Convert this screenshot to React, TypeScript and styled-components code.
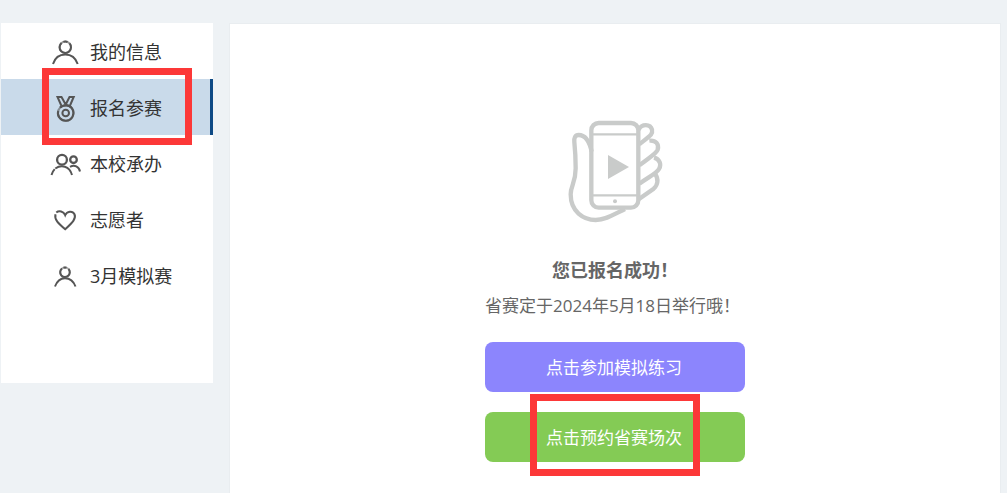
import React from "react";
import styled, { createGlobalStyle, css } from "styled-components";

const GlobalStyle = createGlobalStyle`
  *, *::before, *::after { box-sizing: border-box; }
  body {
    margin: 0;
    background: #eef2f5;
    color: #333;
    font-family: "Open Sans", "Noto Sans CJK SC", sans-serif;
  }
`;

const Page = styled.div`
  display: flex;
  align-items: flex-start;
  gap: 16px;
  min-height: 100vh;
  padding: 23px 6px 0 1px;
`;

const Sidebar = styled.nav`
  flex: 0 0 212px;
  min-height: 360px;
  background: #fff;
`;

const Menu = styled.ul`
  margin: 0;
  padding: 0;
  list-style: none;
`;

const MenuItem = styled.li`
  position: relative;
`;

const MenuLink = styled.a<{ $active?: boolean }>`
  display: flex;
  align-items: center;
  gap: 8px;
  height: 56px;
  padding: 2px 0 0 49px;
  color: #333;
  font-size: 18px;
  line-height: 24px;
  text-decoration: none;
  ${(p) =>
    p.$active &&
    css`
      background: #c9daea;
      border-right: 3px solid #0e4a85;
    `}
`;

const MenuIcon = styled.svg`
  width: 32px;
  height: 32px;
  fill: none;
  stroke: #555;
  stroke-width: 2;
`;

const Panel = styled.main`
  flex: 1;
  align-self: stretch;
  display: flex;
  flex-direction: column;
  align-items: center;
  padding: 96px 0 30px;
  background: #fff;
  border: 1px solid #e9edf0;
  border-bottom: 0;
`;

const Illustration = styled.svg`
  width: 95px;
  height: 103px;
  fill: none;
  stroke: #c9cbca;
  stroke-width: 13;
`;

const Result = styled.section`
  display: flex;
  flex-direction: column;
  width: 260px;
  margin-top: 34px;
  color: #666;
`;

const Title = styled.h1`
  margin: 0;
  font-size: 18px;
  line-height: 26px;
  text-align: center;
`;

const Notice = styled.p`
  margin: 10px 0 23px;
  font-size: 17px;
  line-height: 26px;
  white-space: nowrap;
`;

const Action = styled.div`
  position: relative;
  & + & { margin-top: 20px; }
`;

const ActionButton = styled.button<{ $color: string }>`
  display: block;
  width: 100%;
  height: 50px;
  padding: 2px 2px 0 0;
  border: 0;
  border-radius: 8px;
  background: ${(p) => p.$color};
  color: #fff;
  font-family: inherit;
  font-size: 17px;
  line-height: 24px;
  cursor: pointer;
`;

const Highlight = styled.span<{ $inset: string }>`
  position: absolute;
  inset: ${(p) => p.$inset};
  border: 7px solid #fc3838;
  pointer-events: none;
`;

const UserIcon = () => (
  <MenuIcon viewBox="0 0 32 32" aria-hidden="true">
    <circle cx="15.300" cy="11.300" r="5.700" strokeOpacity="0.6" />
    <path d="M11.500 7A5.700 5.700 0 1 0 19.500 7.400M13.400 5.900A5.700 5.700 0 0 1 17.500 6" />
    <path d="M3 28C5 21.500 9.500 18.500 15.300 18.500S25.500 21.500 27.700 28" />
  </MenuIcon>
);

const MedalIcon = () => (
  <MenuIcon viewBox="0 0 32 32" aria-hidden="true">
    <circle cx="15.700" cy="21" r="7.800" strokeOpacity="0.6" />
    <path d="M8.200 18.900A7.800 7.800 0 1 0 10.200 15.500" />
    <path d="M10.200 15.500A7.800 7.800 0 0 1 21.200 15.500" />
    <circle cx="15.700" cy="21" r="3.300" />
    <path d="M11.500 14L7.500 5H11.500L15.700 12.500L19.500 5H23.700L19.800 14" />
  </MenuIcon>
);

const TeamIcon = () => (
  <MenuIcon viewBox="0 0 32 32" aria-hidden="true">
    <circle cx="12" cy="11.700" r="4.900" strokeWidth="2.300" />
    <circle cx="23.500" cy="11.700" r="3.300" strokeWidth="2.300" />
    <path d="M1.500 27C2.200 24.500 3.300 22.500 4.700 21.100M5.300 20.500C11 16.500 19.500 17.500 22 27M20 18.900C24.500 16.500 29 18.500 30 23.500" />
  </MenuIcon>
);

const HeartIcon = () => (
  <MenuIcon viewBox="0 0 32 32" aria-hidden="true">
    <path d="M6.300 8.600C9 6.300 13.500 7.300 15.200 11.200C17 7.200 22.500 6.500 24.500 10.300C26.500 14.500 22.500 18.500 15.200 25.200C8.500 19.500 4 15.500 5.500 10.200" />
  </MenuIcon>
);

const GuestIcon = () => (
  <MenuIcon viewBox="0 0 32 32" aria-hidden="true">
    <circle cx="15" cy="12.300" r="4.800" strokeOpacity="0.5" />
    <path d="M12 8.500A4.800 4.800 0 1 0 18.500 9M13.500 7.700A4.800 4.800 0 0 1 16.500 7.700" />
    <path d="M5 26.500C7 21 10.500 18.200 15 18.200S23.500 21 25.500 26.500" />
  </MenuIcon>
);

const PhoneInHand = () => (
  <Illustration viewBox="54 45 285 309" role="img" aria-label="手机">
    <path d="M125 140C119 112 108 90 86 90C75 90 72 99 73 111C77 150 77 170 77 190C77 235 62 240 62 268C62 320 100 345 137 345C168 345 192 328 225 312" />
    <path d="M266 74C275 56 301 56 306 74C309 88 302 91 268 118" />
    <path d="M298 107C318 105 328 118 323 134C319 145 308 150 268 181" />
    <path d="M312 158C329 162 335 178 327 192C320 205 300 213 268 236" />
    <path d="M316 208C326 222 324 240 311 251L266 283" />
    <rect x="124" y="54" width="141" height="254" rx="22" />
    <path d="M124 88H265M124 271H265" strokeWidth="7" />
    <circle cx="195" cy="289" r="6" fill="#c9cbca" stroke="none" />
    <path d="M174 150L237 186L174 222Z" fill="#c9cbca" stroke="none" />
  </Illustration>
);

const menu = [
  { label: "我的信息", Icon: UserIcon },
  { label: "报名参赛", Icon: MedalIcon, active: true },
  { label: "本校承办", Icon: TeamIcon },
  { label: "志愿者", Icon: HeartIcon },
  { label: "3月模拟赛", Icon: GuestIcon },
];

export default function App() {
  return (
    <>
      <GlobalStyle />
      <Page>
        <Sidebar>
          <Menu>
            {menu.map(({ label, Icon, active }) => (
              <MenuItem key={label}>
                <MenuLink href="#" $active={active} aria-current={active ? "page" : undefined}>
                  <Icon />
                  {label}
                </MenuLink>
                {active && <Highlight $inset="-11px 21px -10px 41px" />}
              </MenuItem>
            ))}
          </Menu>
        </Sidebar>
        <Panel>
          <PhoneInHand />
          <Result>
            <Title>您已报名成功！</Title>
            <Notice>省赛定于2024年5月18日举行哦！</Notice>
            <Action>
              <ActionButton type="button" $color="#8c85fd">点击参加模拟练习</ActionButton>
            </Action>
            <Action>
              <ActionButton type="button" $color="#84cb55">点击预约省赛场次</ActionButton>
              <Highlight $inset="-18px 45px -14px" />
            </Action>
          </Result>
        </Panel>
      </Page>
    </>
  );
}
